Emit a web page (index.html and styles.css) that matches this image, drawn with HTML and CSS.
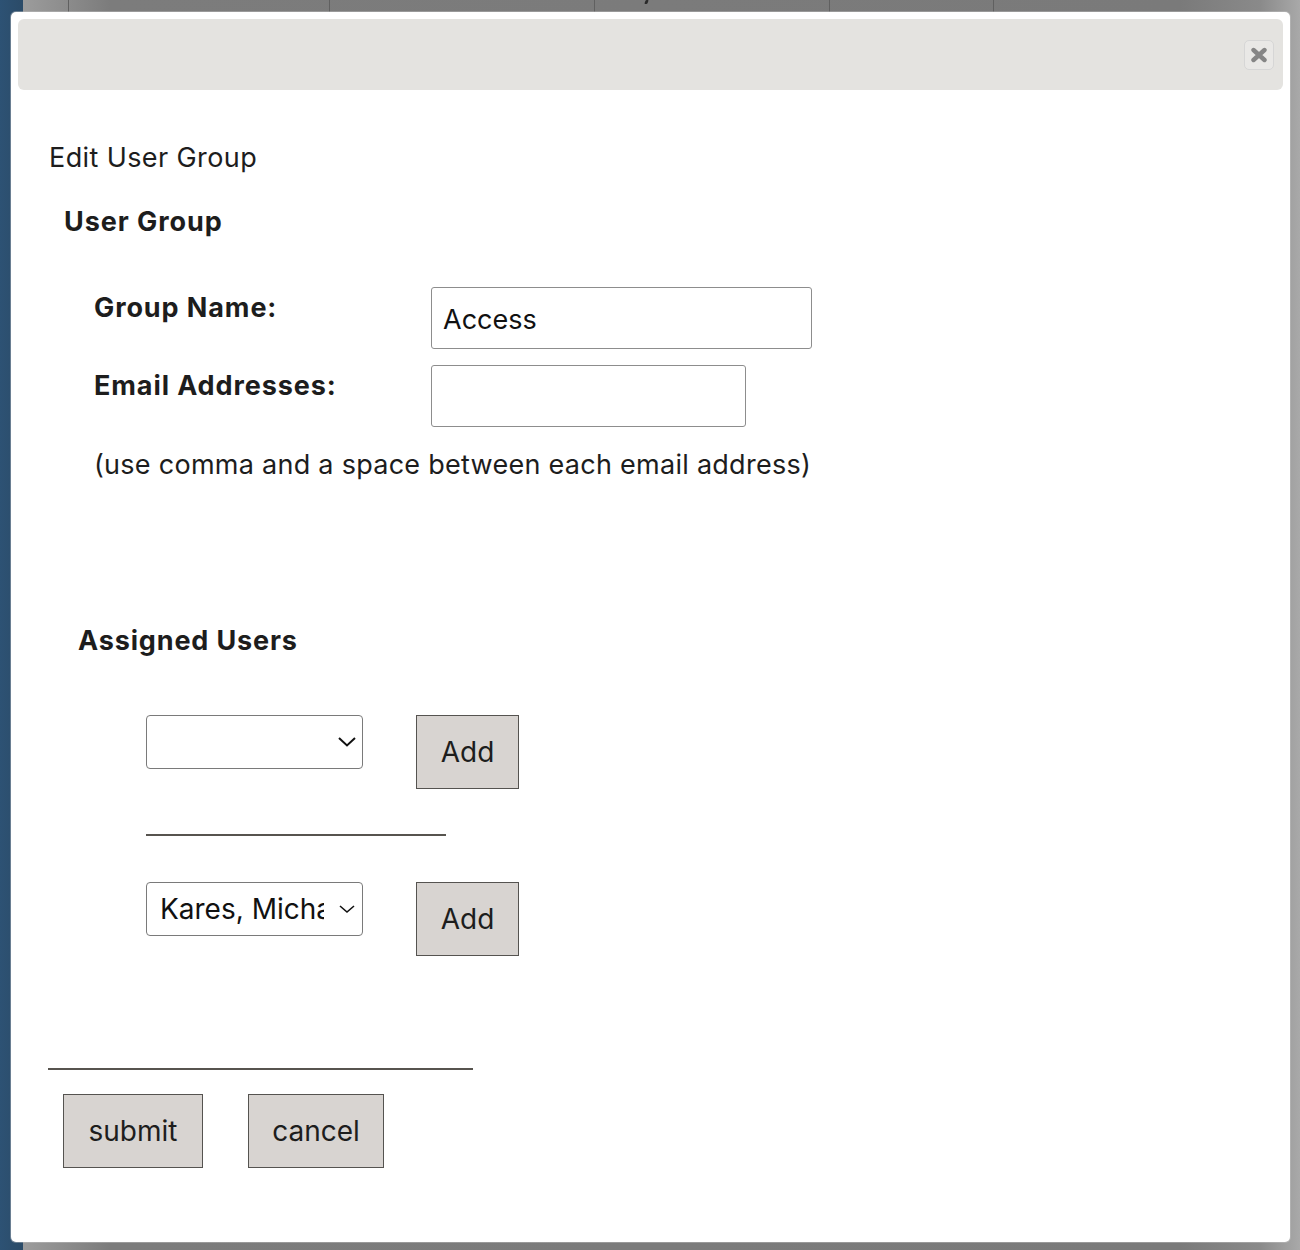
FILE: index.html
```html
<!DOCTYPE html>
<html lang="en">
<head>
<meta charset="utf-8">
<title>Edit User Group</title>
<link rel="stylesheet" href="styles.css">
</head>
<body>
<div class="page-head">
  <div class="col c1"></div>
  <div class="col c2"></div>
  <div class="col c3"></div>
  <div class="col c4"><span class="tick"></span></div>
  <div class="col c5"></div>
  <div class="col c6"></div>
</div>

<div class="modal">
  <div class="modal-header">
    <button class="close" type="button" aria-label="close">
      <svg width="18" height="16" viewBox="0 0 18 16"><path d="M3.5 3 L14.5 13 M14.5 3 L3.5 13" stroke="#858585" stroke-width="4.4" stroke-linecap="round" fill="none"/></svg>
    </button>
  </div>
  <div class="modal-body">
    <h2 class="title">Edit User Group</h2>
    <h3 class="section">User Group</h3>
    <div class="fields">
      <label class="label">Group Name:</label>
      <input class="input wide" type="text" value="Access">
      <label class="label">Email Addresses:</label>
      <input class="input narrow" type="text" value="">
    </div>
    <p class="hint">(use comma and a space between each email address)</p>

    <h3 class="assigned">Assigned Users</h3>
    <div class="assign-row">
      <div class="select-wrap">
        <select class="select"><option></option></select>
        <svg class="chev" width="20" height="12" viewBox="0 0 20 12"><path d="M2 2 L10 9.5 L18 2" stroke="#111" stroke-width="2" fill="none"/></svg>
      </div>
      <button class="btn add" type="button">Add</button>
    </div>
    <hr class="rule short">
    <div class="assign-row second">
      <div class="select-wrap">
        <select class="select"><option>Kares, Michael</option></select>
        <svg class="chev small" width="20" height="12" viewBox="0 0 20 12"><path d="M3 3 L10 9 L17 3" stroke="#111" stroke-width="1.6" fill="none"/></svg>
      </div>
      <button class="btn add" type="button">Add</button>
    </div>
    <hr class="rule long">
    <div class="actions">
      <button class="btn submit" type="button">submit</button>
      <button class="btn cancel" type="button">cancel</button>
    </div>
  </div>
</div>
</body>
</html>
```

FILE: styles.css
```css
* { box-sizing: border-box; }

html, body {
  margin: 0;
  padding: 0;
}

body {
  width: 1300px;
  height: 1250px;
  position: relative;
  overflow: hidden;
  font-family: Inter, "Noto Sans", "Liberation Sans", sans-serif;
  color: #1d1d1d;
  background:
    linear-gradient(90deg, #2d5274 0, #2b4b68 23px, rgba(0,0,0,0) 23px),
    linear-gradient(90deg, #9c9c9c 23px, #7c7c7c 110px, #7a7a7a 1180px, #8a8a8a 1260px, #a9a9a9 1300px);
}

.page-head {
  display: flex;
  height: 12px;
  margin-left: 23px;
}

.col {
  height: 12px;
  border-right: 1px solid #606060;
}
.c1 { width: 46px; }
.c2 { width: 261px; }
.c3 { width: 265px; }
.c4 { width: 235px; position: relative; }
.c5 { width: 164px; }
.c6 { flex: 1; border-right: none; }

.tick {
  position: absolute;
  left: 50px;
  top: 0;
  width: 3px;
  height: 4px;
  background: #2a2a2a;
  border-radius: 1px;
  transform: skewX(-20deg);
}

.modal {
  position: absolute;
  left: 11px;
  top: 12px;
  width: 1279px;
  height: 1230px;
  background: #fff;
  border-radius: 5px;
  padding: 7px;
  box-shadow: 0 0 0 1px rgba(200,200,200,0.4);
}

.modal-header {
  height: 71px;
  background: #e4e3e0;
  border-radius: 6px;
  display: flex;
  justify-content: flex-end;
  align-items: center;
  padding-right: 9px;
}

.close {
  width: 30px;
  height: 30px;
  padding: 0;
  border: 1px solid #d6d6d6;
  border-radius: 5px;
  background: #e9e8e6;
  display: flex;
  align-items: center;
  justify-content: center;
}

.modal-body {
  padding-left: 31px;
}

.title {
  margin: 52px 0 0;
  font-size: 27px;
  line-height: 32px;
  font-weight: 400;
  letter-spacing: 0.4px;
}

.section {
  margin: 32px 0 0 15px;
  font-size: 27px;
  line-height: 32px;
  font-weight: 700;
  letter-spacing: 0.95px;
}

.fields {
  margin: 49px 0 0 45px;
  display: grid;
  grid-template-columns: 337px auto;
  row-gap: 16px;
  justify-items: start;
}

.label {
  padding-top: 5px;
  font-size: 27px;
  line-height: 32px;
  font-weight: 700;
  letter-spacing: 0.9px;
}

.input {
  height: 62px;
  border: 1px solid #8d8d8d;
  border-radius: 3px;
  padding: 2px 11px 0;
  font-family: inherit;
  font-size: 27px;
  color: #111;
  background: #fff;
}
.wide { width: 381px; }
.narrow { width: 315px; }

.hint {
  margin: 22px 0 0 45px;
  font-size: 27px;
  line-height: 32px;
  letter-spacing: 0.27px;
}

.assigned {
  margin: 144px 0 0 29px;
  font-size: 27px;
  line-height: 32px;
  font-weight: 700;
  letter-spacing: 0.85px;
}

.assign-row {
  margin: 58px 0 0 97px;
  display: flex;
  align-items: flex-start;
  gap: 53px;
}
.assign-row.second { margin-top: 46px; }

.select-wrap {
  position: relative;
  width: 217px;
  height: 54px;
}

.select {
  appearance: none;
  -webkit-appearance: none;
  width: 100%;
  height: 100%;
  border: 1px solid #7a7a7a;
  border-radius: 4px;
  background: #fff;
  padding: 0 38px 0 13px;
  font-family: inherit;
  font-size: 28px;
  color: #111;
}

.chev {
  position: absolute;
  right: 6px;
  top: 21px;
  pointer-events: none;
}

.btn {
  height: 74px;
  border: 1px solid #555350;
  background: #d8d4d1;
  font-family: inherit;
  font-size: 28px;
  color: #1d1d1d;
  padding: 0;
}
.add { width: 103px; }
.submit { width: 140px; }
.cancel { width: 136px; }

.rule {
  border: none;
  border-top: 2px solid #57544f;
  height: 0;
  margin: 0;
}
.short {
  width: 300px;
  margin: 45px 0 0 97px;
}
.long {
  width: 425px;
  margin: 112px 0 0 -1px;
}

.actions {
  margin: 24px 0 0 14px;
  display: flex;
  gap: 45px;
}
```
